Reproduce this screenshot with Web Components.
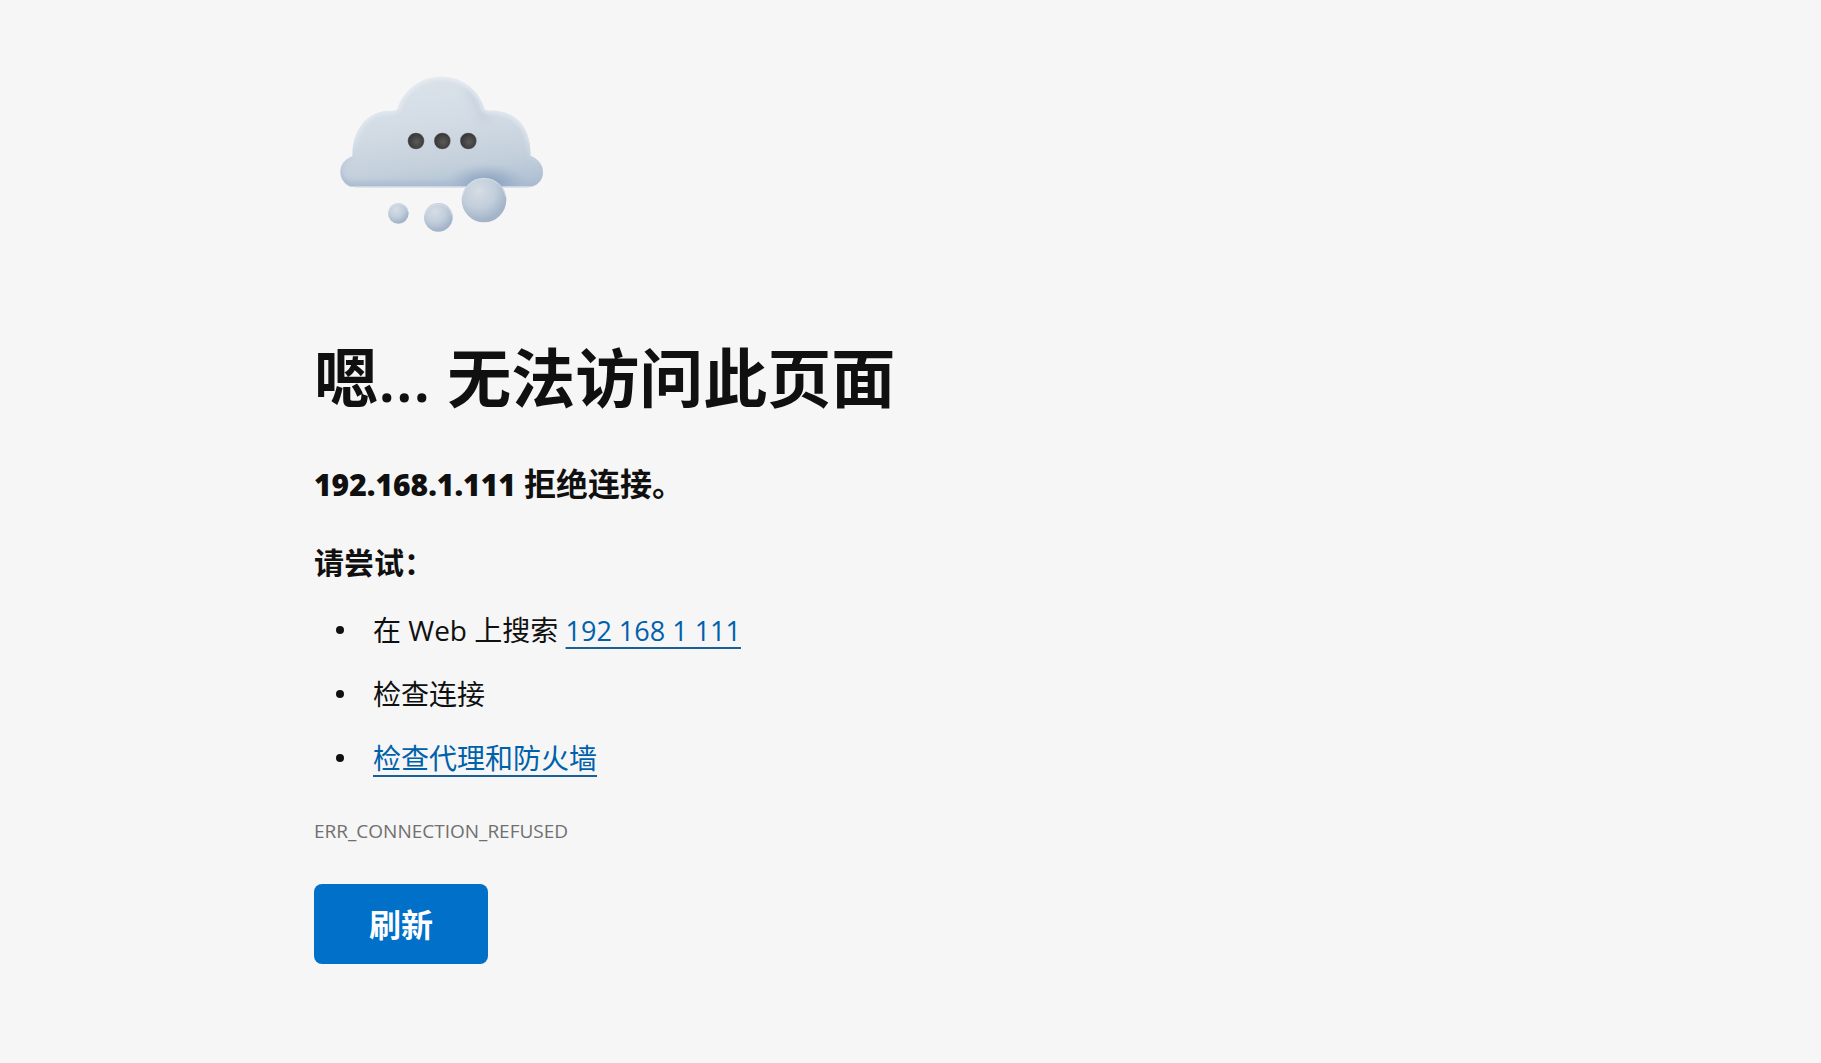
<!DOCTYPE html>
<html lang="zh-CN">
<head>
<meta charset="utf-8">
<meta name="viewport" content="width=device-width, initial-scale=1">
<title>192.168.1.111</title>
<style>
  body {
    margin: 0;
    background: #f6f6f6;
    color: #101010;
    font-family: "Open Sans", "Noto Sans CJK SC", sans-serif;
  }
  .host { font-size: 30px; line-height: 1; font-weight: 800; }
</style>
</head>
<body>
<error-page>
  <cloud-picture slot="picture"></cloud-picture>
  <span slot="title">嗯... 无法访问此页面</span>
  <span slot="summary"><span class="host">192.168.1.111</span> 拒绝连接。</span>
  <suggestion-list slot="suggestions"></suggestion-list>
  <span slot="code">ERR_CONNECTION_REFUSED</span>
  <action-button slot="action">刷新</action-button>
</error-page>

<script>
class ShadowElement extends HTMLElement {
  constructor() {
    super();
    this.attachShadow({ mode: "open" }).innerHTML = this.constructor.markup;
  }
}

class ErrorPage extends ShadowElement {
  static markup = `
    <style>
      :host { display: block; padding: 26px 24px; }
      main {
        display: flex;
        flex-direction: column;
        align-items: flex-start;
        max-width: 1193px;
        margin: 0 auto;
      }
      h1, h2, p { margin: 0; }
      h1 { margin-top: 56px; font-size: 64px; line-height: 80px; font-weight: 600; }
      h2 { margin-top: 46px; font-size: 32px; line-height: 40px; font-weight: 700; }
      .code { margin-top: 39px; color: #707070; font-size: 19px; line-height: 28px; }
      slot[name="action"] { display: block; margin-top: 39px; }
    </style>
    <main>
      <slot name="picture"></slot>
      <h1><slot name="title"></slot></h1>
      <h2><slot name="summary"></slot></h2>
      <slot name="suggestions"></slot>
      <p class="code"><slot name="code"></slot></p>
      <slot name="action"></slot>
    </main>`;
}

class SuggestionList extends ShadowElement {
  static markup = `
    <style>
      :host { display: block; margin-top: 39px; }
      h3 { margin: 0; font-size: 30px; line-height: 40px; font-weight: 700; }
      ul {
        display: flex;
        flex-direction: column;
        gap: 24px;
        margin: 27px 0 0;
        padding: 0;
        list-style: none;
        font-size: 28px;
        line-height: 40px;
      }
      li { display: flex; align-items: center; gap: 29px; padding-left: 22px; }
      li::before {
        content: "";
        width: 8px;
        height: 8px;
        border-radius: 50%;
        background: #101010;
      }
      a {
        color: #0061ab;
        text-decoration: underline 2px #1a5f96;
        text-decoration-skip-ink: none;
        text-underline-offset: 6px;
      }
      .query { font-size: 27px; line-height: 1; }
    </style>
    <h3>请尝试：</h3>
    <ul>
      <li><span>在 Web 上搜索 <a class="query" href="#search">192 168 1 111</a></span></li>
      <li><span>检查连接</span></li>
      <li><a href="#proxy">检查代理和防火墙</a></li>
    </ul>`;
}

class ActionButton extends ShadowElement {
  static markup = `
    <style>
      :host { display: block; }
      button {
        display: block;
        min-width: 174px;
        height: 80px;
        padding: 2px 48px 0;
        border: 0;
        border-radius: 8px;
        background: #0070c9;
        color: #fff;
        font: 700 32px/40px "Open Sans", "Noto Sans CJK SC", sans-serif;
        cursor: pointer;
      }
    </style>
    <button type="button"><slot></slot></button>`;
}

class CloudPicture extends ShadowElement {
  static markup = `
    <style>
      :host { display: block; }
      svg { display: block; width: 256px; height: 256px; }
    </style>
    <svg viewBox="-18 -102 768 768" aria-hidden="true">
      <defs>
        <path id="cloud" d="M110 382C80 382 61 360 61 335C61 313 76 297 98 289C95 215 140 153 205 153C217 152 226 153 232 149C249 91 302 50 364 50C428 50 478 92 494 148C497 154 510 152 530 153C598 160 634 215 631 287C655 297 669 314 669 337C669 362 649 382 620 382Z"/>
        <clipPath id="inside"><use href="#cloud"/></clipPath>
        <linearGradient id="body" x1=".35" y1="0" x2=".6" y2="1">
          <stop offset="0" stop-color="#dbe2ea"/>
          <stop offset=".45" stop-color="#d2dbe4"/>
          <stop offset=".8" stop-color="#c3cfdb"/>
          <stop offset="1" stop-color="#b3c3d5"/>
        </linearGradient>
        <radialGradient id="ball" cx=".38" cy=".3" r=".75">
          <stop offset="0" stop-color="#d5dde5"/>
          <stop offset=".5" stop-color="#c2cedb"/>
          <stop offset=".85" stop-color="#a6b6ca"/>
          <stop offset="1" stop-color="#a0b1c7"/>
        </radialGradient>
        <radialGradient id="shade">
          <stop offset="0" stop-color="#7f99bb" stop-opacity=".9"/>
          <stop offset=".5" stop-color="#8ea5c2" stop-opacity=".55"/>
          <stop offset="1" stop-color="#a5b7cd" stop-opacity="0"/>
        </radialGradient>
        <linearGradient id="rim" x1="0" y1="0" x2="0" y2="1">
          <stop offset="0" stop-color="#e9eef4"/>
          <stop offset=".55" stop-color="#dfe7ef"/>
          <stop offset=".8" stop-color="#b9c8da"/>
          <stop offset="1" stop-color="#a6b8ce"/>
        </linearGradient>
        <radialGradient id="dot" cx=".55" cy=".55" r=".55">
          <stop offset="0" stop-color="#5a5a59"/>
          <stop offset="1" stop-color="#353535"/>
        </radialGradient>
        <filter id="soft" x="-30%" y="-50%" width="160%" height="200%" color-interpolation-filters="sRGB"><feGaussianBlur stdDeviation="7"/></filter>
        <filter id="softer" x="-80%" y="-80%" width="260%" height="260%" color-interpolation-filters="sRGB"><feGaussianBlur stdDeviation="14"/></filter>
        <filter id="edge" x="-10%" y="-10%" width="120%" height="120%" color-interpolation-filters="sRGB"><feGaussianBlur stdDeviation="1.5"/></filter>
      </defs>
      <use href="#cloud" fill="url(#body)" filter="url(#edge)"/>
      <g clip-path="url(#inside)">
        <path d="M445 85Q478 120 490 172L510 170" fill="none" stroke="#b7c6d7" stroke-width="20" opacity=".6" filter="url(#softer)"/>
        <rect x="60" y="362" width="610" height="26" fill="#a6b8ce" opacity=".4" filter="url(#soft)"/>
        <use href="#cloud" fill="none" stroke="url(#rim)" stroke-width="14" filter="url(#soft)"/>
        <ellipse cx="500" cy="368" rx="125" ry="58" fill="url(#shade)"/>
        <rect x="90" y="379" width="555" height="6" fill="#dbe3ec" filter="url(#edge)"/>
      </g>
      <g fill="url(#ball)" filter="url(#edge)">
        <circle cx="492" cy="420" r="67"/>
        <circle cx="355" cy="472" r="43"/>
        <circle cx="235" cy="460" r="31"/>
      </g>
      <g fill="none" stroke="#dce4ed" stroke-width="3" opacity=".7" filter="url(#edge)">
        <path d="M427 410A66 66 0 0 1 557 410"/>
        <path d="M314 466A42 42 0 0 1 396 466"/>
        <path d="M206 454A30 30 0 0 1 264 454"/>
      </g>
      <g fill="url(#dot)" stroke="#dce2e7" stroke-opacity=".5" stroke-width="2">
        <circle cx="288" cy="243" r="25"/>
        <circle cx="367" cy="243" r="25"/>
        <circle cx="445" cy="243" r="25"/>
      </g>
    </svg>`;
}

customElements.define("error-page", ErrorPage);
customElements.define("suggestion-list", SuggestionList);
customElements.define("action-button", ActionButton);
customElements.define("cloud-picture", CloudPicture);
</script>
</body>
</html>
